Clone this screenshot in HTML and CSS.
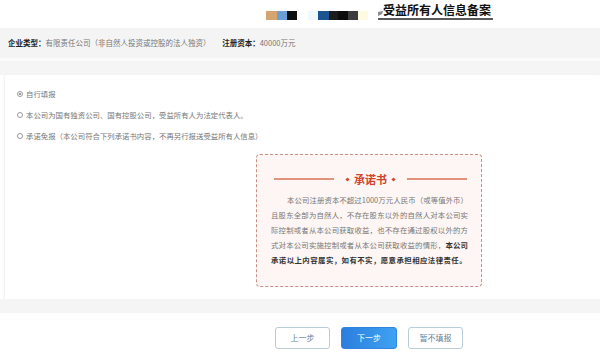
FILE: index.html
```html
<!DOCTYPE html>
<html lang="zh-CN">

<head>
    <meta charset="UTF-8">
    <title>受益所有人信息备案</title>
    <link rel="stylesheet" href="styles.css">
</head>

<body>
    <div class="header">
        <div class="mosaic">
            <span class="c1"></span>
            <span class="c2"></span>
            <span class="c3"></span>
            <span class="c4"></span>
            <span class="c5"></span>
            <span class="c6"></span>
            <span class="c7"></span>
            <span class="c8"></span>
            <span class="c9"></span>
        </div>
        <div class="title">
            <svg class="mark" width="5" height="5" viewBox="0 0 5 5"><path d="M0 5 L0 1 L5 0 L4 3 Z" fill="#8a8a8a"/></svg>
            <span>受益所有人信息备案</span>
        </div>
    </div>

    <div class="info">
        <b>企业类型：</b><span class="val">有限责任公司（非自然人投资或控股的法人独资）</span>
        <b>注册资本：</b><span>40000万元</span>
    </div>

    <div class="gap"></div>

    <div class="panel">
        <div class="radio"><i class="dot on"></i>自行填报</div>
        <div class="radio"><i class="dot"></i>本公司为国有独资公司、国有控股公司，受益所有人为法定代表人。</div>
        <div class="radio"><i class="dot"></i>承诺免报（本公司符合下列承诺书内容，不再另行报送受益所有人信息）</div>

        <div class="promise">
            <div class="promise-title">
                <span class="line"></span>
                <span class="diamond"></span>
                <span class="name">承诺书</span>
                <span class="diamond"></span>
                <span class="line"></span>
            </div>
            <p class="promise-text">
                <span class="ln first">本公司注册资本不超过1000万元人民币（或等值外币）</span>
                <span class="ln">且股东全部为自然人，不存在股东以外的自然人对本公司实</span>
                <span class="ln">际控制或者从本公司获取收益，也不存在通过股权以外的方</span>
                <span class="ln">式对本公司实施控制或者从本公司获取收益的情形，<b>本公司</b></span>
                <span class="ln last"><b>承诺以上内容属实，如有不实，愿意承担相应法律责任。</b></span>
            </p>
        </div>
    </div>

    <div class="band"></div>

    <div class="footer">
        <a href="javascript:;" class="btn">上一步</a>
        <a href="javascript:;" class="btn primary">下一步</a>
        <a href="javascript:;" class="btn">暂不填报</a>
    </div>
</body>

</html>
```

FILE: styles.css
```css
* {
    margin: 0;
    padding: 0;
    text-decoration: none;
    box-sizing: border-box;
}

body {
    width: 600px;
    height: 352px;
    overflow: hidden;
    background-color: #fff;
    font-family: "Noto Sans CJK SC", "Noto Sans", sans-serif;
    color: #666;
}

/* 顶部 */
.header {
    height: 28px;
    display: flex;
    align-items: flex-start;
    padding-left: 266px;
}

.mosaic {
    display: flex;
    margin-top: 11px;
    height: 9px;
}

.mosaic span {
    display: block;
    width: 10px;
    height: 9px;
}

.mosaic .c1 { background-color: #d4a570; width: 11px; }
.mosaic .c2 { background-color: #6a9fd5; }
.mosaic .c3 { background-color: #0e0e0e; }
.mosaic .c4 { background-color: #eefafd; margin-left: 11px; }
.mosaic .c5 { background-color: #1b5491; width: 11px; }
.mosaic .c6 { background-color: #1c1c1a; width: 9px; }
.mosaic .c7 { background-color: #0c0c0c; }
.mosaic .c8 { background-color: #3b3c3b; }
.mosaic .c9 { background-color: #fffbe2; }

.title {
    display: flex;
    align-items: flex-end;
    margin-left: 10px;
    margin-top: 2px;
    height: 18px;
    border-bottom: 2px solid #5a5a5a;
    padding-right: 2px;
}

.title .mark {
    margin-bottom: 2px;
}

.title span {
    font-size: 12px;
    line-height: 16px;
    font-weight: bold;
    color: #111;
}

/* 企业信息 */
.info {
    height: 30px;
    line-height: 30px;
    padding-left: 8px;
    background-color: #f4f4f4;
    font-size: 7.5px;
    color: #777;
}

.info b {
    color: #222;
}

.info .val {
    margin-right: 10px;
}

.gap {
    height: 17px;
    background-color: #f5f5f5;
    border-top: 3px solid #fbfbfb;
}

/* 选项 */
.panel {
    height: 224px;
    margin-left: 5px;
    padding-top: 8px;
    background-color: #fff;
    box-shadow: -1px 0 2px #eee;
}

.radio {
    display: flex;
    align-items: center;
    height: 21px;
    padding-left: 12px;
    font-size: 7.4px;
    color: #777;
}

.dot {
    width: 6px;
    height: 6px;
    border: 1px solid #9a9a9a;
    border-radius: 50%;
    margin-right: 3px;
    position: relative;
}

.dot.on::after {
    content: "";
    position: absolute;
    left: 1px;
    top: 1px;
    width: 2px;
    height: 2px;
    border-radius: 50%;
    background-color: #777;
}

/* 承诺书 */
.promise {
    width: 226px;
    height: 133px;
    margin: 8px 0 0 251px;
    padding: 16px 13px 0 14px;
    background-color: #fdf6f4;
    border: 1px dashed #c99086;
    border-radius: 4px;
}

.promise-title {
    display: flex;
    align-items: center;
    height: 16px;
    padding: 0 1px 0 3px;
}

.promise-title .line {
    flex: 1;
    height: 1.5px;
    background-color: #e0927a;
}

.promise-title .diamond {
    width: 3px;
    height: 3px;
    margin: 0 5px 0 12px;
    background-color: #d9462e;
    transform: rotate(45deg);
}

.promise-title .diamond + .name + .diamond {
    margin: 0 12px 0 5px;
}

.promise-title .name {
    font-size: 11px;
    font-weight: bold;
    color: #d0432c;
    line-height: 16px;
}

.promise-text {
    margin-top: 5px;
    font-size: 7.4px;
    line-height: 15px;
    color: #777;
}

.promise-text .ln {
    display: block;
    white-space: nowrap;
    text-align: justify;
    text-align-last: justify;
}

.promise-text .first {
    padding-left: 16px;
}

.promise-text .last {
    text-align-last: left;
    letter-spacing: 0.45px;
}

.promise-text b {
    color: #333;
}

.band {
    height: 14px;
    background-color: #f5f5f5;
}

/* 按钮 */
.footer {
    display: flex;
    gap: 11px;
    padding: 14px 0 0 275px;
    height: 39px;
}

.btn {
    width: 55px;
    height: 22px;
    line-height: 20px;
    text-align: center;
    font-size: 8px;
    color: #5f829b;
    border: 1px solid #b8cdd8;
    border-radius: 3px;
    background-color: #fff;
}

.btn.primary {
    width: 56px;
    color: #fff;
    border-color: #2f84e0;
    background: linear-gradient(90deg, #2c7edd, #3ea2f2);
}
```
